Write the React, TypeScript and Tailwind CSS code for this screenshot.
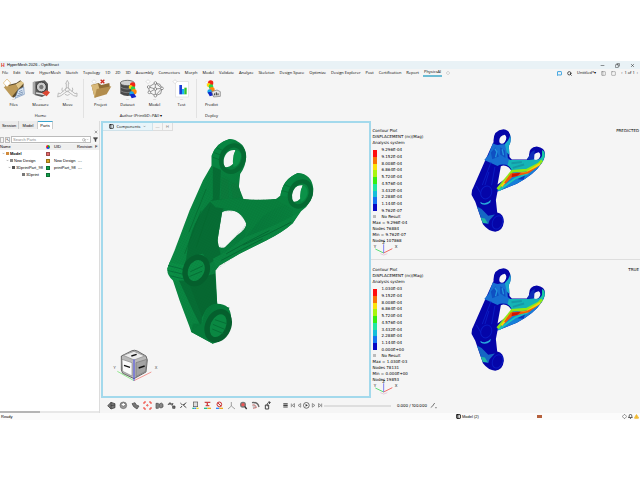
import type { ReactNode } from "react";
import {
  AlertTriangle,
  Bell,
  ChevronDown,
  Copy,
  Diamond,
  Filter,
  MessageSquare,
  Minus,
  PanelLeft,
  Search,
  Square,
  X,
} from "lucide-react";

const MENUS = [
  "File",
  "Edit",
  "View",
  "HyperMesh",
  "Sketch",
  "Topology",
  "1D",
  "2D",
  "3D",
  "Assembly",
  "Connectors",
  "Morph",
  "Model",
  "Validate",
  "Analyze",
  "Skeleton",
  "Design Space",
  "Optimize",
  "Design Explorer",
  "Post",
  "Certification",
  "Report",
];

const BANDS = [
  "bg-[#ff0d0d]",
  "bg-[#f97306]",
  "bg-[#fbe209]",
  "bg-[#a8f50c]",
  "bg-[#35ee12]",
  "bg-[#1fe6a4]",
  "bg-[#13bfd9]",
  "bg-[#1474f2]",
  "bg-[#0808c4]",
];

const SHARED_LEVELS = [
  "9.152E-04",
  "8.008E-04",
  "6.864E-04",
  "5.720E-04",
  "4.576E-04",
  "3.432E-04",
  "2.288E-04",
  "1.144E-04",
];

/* ---------- ribbon icons ---------- */

const BigIcon = ({ children }: { children: ReactNode }) => (
  <svg viewBox="0 0 66 60" className="h-5 w-[22px]" aria-hidden="true">
    {children}
  </svg>
);

const CornerDiamond = ({ fill = "#fff" }: { fill?: string }) => (
  <path d="M12 2 L18 8 L12 14 L6 8Z" fill={fill} stroke="#c2c2c2" strokeWidth="1.5" />
);

const FilesIcon = () => (
  <BigIcon>
    <path d="M6 20 L40 12 L52 4 L62 14 L60 40 L30 56Z" fill="#5b4a2c" />
    <path d="M2 24 L38 16 L46 30 L26 54Z" fill="#bd9a58" />
    <path d="M38 16 L54 6 L63 12 L46 30Z" fill="#e2c88c" />
    <path d="M46 32 L62 24 L64 46 L36 58Z" fill="#dce7f3" stroke="#6b8db8" strokeWidth="2" />
    <path d="M48 38 L58 34 M46 44 L60 39 M42 51 L60 44" stroke="#54749e" strokeWidth="2" />
    <path d="M12 0 L23 12 L12 24 L1 12Z" fill="#fff" stroke="#dcb36a" strokeWidth="2" />
  </BigIcon>
);

const MeasureIcon = () => (
  <BigIcon>
    <path d="M14 8 L44 4 L54 14 L54 44 L36 54 L14 48Z" fill="#5c5c5c" />
    <path d="M8 10 L16 6 L16 48 L8 44Z" fill="#a8a8a8" />
    <circle cx="34" cy="24" r="15" fill="#c9c9c9" stroke="#333" strokeWidth="3" />
    <circle cx="34" cy="24" r="8" fill="#777" stroke="#eee" strokeWidth="2" />
    <path d="M18 42 L44 46" stroke="#ddd" strokeWidth="5" />
    <path d="M36 42 L50 34 L60 40 L50 52Z" fill="#dc4632" />
  </BigIcon>
);

const MoveIcon = () => (
  <BigIcon>
    <g fill="none" stroke="#b1b1b1" strokeWidth="2.5">
      <path d="M31 4 L36 14 L34 14 L34 28 L54 44 L60 42 L60 52 L50 50 L31 36 L12 50 L2 54 L4 42 L10 44 L28 28 L28 14 L26 14Z" />
      <circle cx="31" cy="32" r="6" />
      <path d="M16 26 Q12 34 18 38 M46 26 Q50 34 44 38 M24 46 Q31 52 38 46" />
    </g>
  </BigIcon>
);

const ProjectIcon = () => (
  <BigIcon>
    <path d="M4 18 L26 12 L34 18 L58 12 L60 28 L14 56Z" fill="#8e6c34" />
    <path d="M4 18 L24 14 L30 36 L14 56Z" fill="#d8b878" />
    <path d="M20 30 L64 22 L50 46 L14 56Z" fill="#b28d4d" />
    <path d="M32 2 L43 13 M43 2 L32 13" stroke="#cf2a1d" strokeWidth="4" />
    <CornerDiamond />
  </BigIcon>
);

const DatasetIcon = () => (
  <BigIcon>
    <path d="M10 12 V44 Q32 58 52 44 V12Z" fill="#4a4a4a" />
    <ellipse cx="31" cy="12" rx="21" ry="8" fill="#cfcfcf" stroke="#444" strokeWidth="2" />
    <path d="M10 24 Q30 36 52 24 M10 35 Q30 47 52 35" fill="none" stroke="#999" strokeWidth="2" />
    <Contour />
  </BigIcon>
);

const Contour = () => (
  <g>
    <circle cx="47" cy="18" r="8" fill="#f12414" />
    <circle cx="41" cy="24" r="6" fill="#ffd60a" />
    <circle cx="48" cy="29" r="7" fill="#2fd44a" />
    <circle cx="51" cy="38" r="8" fill="#ff8a08" />
    <circle cx="44" cy="44" r="7" fill="#16a4e8" />
    <path d="M38 46 L52 44 L58 54 L44 58Z" fill="#1226c8" />
  </g>
);

const NetworkIcon = () => (
  <BigIcon>
    <g stroke="#666" strokeWidth="2">
      <path
        d="M14 24 L34 12 L54 28 L34 30Z M14 24 L16 40 L34 50 L54 28 M34 12 L34 50 M16 40 L34 30 M34 12 L48 16 L54 28 M34 50 L50 44 L54 28"
        fill="none"
      />
      <g fill="#fff">
        <circle cx="14" cy="24" r="4" />
        <circle cx="34" cy="12" r="4" />
        <circle cx="54" cy="28" r="4" />
        <circle cx="34" cy="30" r="4" />
        <circle cx="16" cy="40" r="4" />
        <circle cx="34" cy="50" r="4" />
      </g>
    </g>
    <CornerDiamond />
  </BigIcon>
);

const TestIcon = () => (
  <BigIcon>
    <rect x="14" y="8" width="38" height="46" fill="#fff" stroke="#dcdcdc" strokeWidth="2" />
    <rect x="25" y="18" width="8" height="28" fill="#1a3fd6" />
    <rect x="33" y="30" width="7" height="16" fill="#17b4ee" />
    <rect x="40" y="26" width="7" height="20" fill="#32c02c" />
    <CornerDiamond />
  </BigIcon>
);

const PredictIcon = () => (
  <BigIcon>
    <g transform="translate(-18 -6)">
      <Contour />
    </g>
    <path d="M32 38 L48 33 L58 38 L58 52 L38 54Z" fill="#e6e6e6" stroke="#777" strokeWidth="2" />
    <path d="M41 49 V43 M46 49 V40 M51 49 V43" stroke="#333" strokeWidth="3" />
    <path d="M16 6 L20 10 L16 14 L12 10Z" fill="#fff" stroke="#ccc" />
  </BigIcon>
);

const RibbonButton = ({ label, icon, menu = true }: { label: string; icon: ReactNode; menu?: boolean }) => (
  <button className="flex w-[27px] flex-col items-center">
    {icon}
    <span className="h-[3px] leading-[2px] text-[#777]">{menu ? "···" : ""}</span>
    <span className="leading-[6px]">{label}</span>
  </button>
);

const RibbonGroup = ({ title, children }: { title: string; children: ReactNode }) => (
  <section className="flex flex-col justify-between pb-[2px]">
    <div className="flex">{children}</div>
    <h2 className="text-center leading-[6px]">{title}</h2>
  </section>
);

/* ---------- model drawings ---------- */

const Bracket = () => (
  <svg viewBox="50 22 446 622" className="mr-[-10px] h-[207px] w-[149px] shrink-0" role="img" aria-label="Bracket mesh">
    <defs>
      <pattern id="mesh" width="7" height="7" patternUnits="userSpaceOnUse" patternTransform="rotate(28)">
        <path d="M0 0 H7 M0 0 V7" stroke="#04592a" strokeWidth="1.6" />
      </pattern>
      <linearGradient id="arm" x1="0" x2="1">
        <stop offset="0" stopColor="#0a8a43" />
        <stop offset="0.6" stopColor="#077a3b" />
        <stop offset="1" stopColor="#08843f" />
      </linearGradient>
    </defs>
    <path
      fillRule="evenodd"
      fill="url(#arm)"
      d="M186 105 L187 75 Q200 35 240 25 Q290 32 290 80 Q288 110 272 130 L268 170 L282 205 Q330 210 380 205 L393 195 Q400 145 445 127 Q488 130 492 175 Q492 215 455 242 L430 278 Q400 305 350 330 L270 370 L210 405 L198 420 L203 520 Q245 520 245 565 Q240 625 190 640 L125 605 L120 590 L90 510 L70 450 Q52 435 53 415 L60 395 L75 360 L120 240 L160 150Z
      M204 345 L205 320 L218 245 Q230 236 262 243 Q292 262 291 278 Q290 296 262 315 L226 350 Q212 356 204 345Z
      M224 110 Q217 85 232 67 Q242 56 258 58 Q250 76 252 98 Q240 112 224 110Z
      M428 212 Q421 190 434 174 Q444 163 460 164 Q452 180 454 203 Q442 217 428 212Z"
    />
    <path d="M190 108 L214 118 L210 205 Q240 205 245 212 L218 240 L204 330 L214 375 L180 400 L160 370 Q130 370 118 430 Q135 480 158 550 L155 590 L130 540 L88 450 L110 385 Q120 270 190 205Z" fill="#066d34" />
    <path d="M115 450 L196 430 L203 520 Q175 522 164 548 L158 560 Q135 500 115 450Z" fill="#066831" />
    <path d="M180 212 Q235 200 282 206 Q345 214 392 203 L425 222 Q360 232 330 270 L285 325 L290 280 Q275 240 235 236 L198 230Z" fill="#08803d" />
    <path d="M216 140 L236 148 L238 205 L214 205Z M244 160 L266 158 L276 200 L250 204Z" fill="#0b7b3c" />
    <path d="M286 320 Q370 290 450 245 L430 278 Q400 305 350 330 L270 370 L198 410 L190 385 L226 365Z" fill="#0a8641" />
    <path d="M280 344 Q360 310 425 275 M230 370 Q300 330 360 300 M215 390 Q280 355 340 325" fill="none" stroke="#056a33" strokeWidth="3" />
    <path d="M186 75 Q198 38 240 25 L262 29 Q215 38 210 115 L187 105Z M393 195 Q400 145 445 127 L465 131 Q424 145 416 200Z" fill="#078541" />
    <g fill="none" stroke="#05682f" strokeWidth="2">
      <path d="M190 80 L212 88 M194 66 L216 74 M202 52 L222 60 M398 180 L418 186 M404 162 L424 170" />
      <path d="M170 175 L118 305 M155 240 L105 370 M182 225 L140 350" />
    </g>
    <g fill="none" strokeWidth="13" stroke="#056a32">
      <ellipse cx="249" cy="84" rx="33" ry="41" transform="rotate(24 249 84)" />
      <ellipse cx="453" cy="190" rx="30" ry="39" transform="rotate(24 453 190)" />
    </g>
    <path d="M258 58 Q276 60 275 78 Q270 104 252 110 Q246 80 258 58Z M460 164 Q476 170 474 190 Q468 210 454 214 Q448 188 460 164Z" fill="#0b9248" />
    <path d="M53 415 L60 395 L110 405 L104 450 L72 450Z" fill="#0a8f45" />
    <path d="M56 405 L106 418 M54 420 L104 432 M62 436 L104 446" stroke="#05703a" strokeWidth="3" />
    <path d="M125 605 L130 580 L158 580 L165 545 Q176 522 203 520 L240 532 L190 640Z" fill="#067a3a" />
    <ellipse cx="140" cy="420" rx="32" ry="41" transform="rotate(24 140 420)" fill="#0b8d45" stroke="#055f2d" strokeWidth="16" />
    <ellipse cx="206" cy="586" rx="31" ry="44" transform="rotate(24 206 586)" fill="#0a8842" stroke="#055f2d" strokeWidth="16" />
    <path d="M122 424 L160 406 M120 438 L158 422 M190 582 L228 598 M188 596 L222 610 M196 568 L232 580" stroke="#056f35" strokeWidth="3" />
    <path
      fillRule="evenodd"
      fill="url(#mesh)"
      opacity="0.3"
      d="M190 108 L212 118 L268 170 L282 205 L380 205 L430 235 L430 278 L350 330 L270 370 L198 420 L200 520 L160 580 L125 600 L90 510 L70 450 L60 395 L120 240Z M204 345 L218 245 L262 243 L291 278 L226 350Z"
    />
  </svg>
);

const ContourBracket = () => (
  <svg viewBox="30 18 230 316" className="h-[105px] w-[77px] shrink-0" role="img" aria-label="Displacement contour">
    <path
      fillRule="evenodd"
      fill="#0505a8"
      d="M100 60 Q98 25 130 22 Q150 24 152 48 Q152 62 146 72 L148 105 L155 113 H200 L207 105 Q204 76 230 74 Q256 78 255 98 Q252 118 240 130 Q226 154 170 186 L112 209 L107 235 L111 272 Q131 276 131 300 Q128 328 105 330 Q85 330 68 308 L45 240 L34 220 Q33 205 40 195 L75 115Z
      M112 188 L122 133 Q133 128 146 137 Q158 148 150 160Z
      M118 62 Q114 42 134 38 Q143 46 134 60 Q126 70 118 62Z
      M220 112 Q216 94 236 91 Q245 98 237 110 Q228 118 220 112Z"
    />
    <path d="M84 100 L98 64 Q110 72 120 68 L140 66 L143 108 L155 118 L148 132 Q125 124 112 132 L72 114Z" fill="#176fd2" />
    <path d="M92 92 L106 76 L116 104 L96 112Z M120 76 L134 86 L136 108 L120 98Z" fill="#0f50c2" />
    <path d="M134 66 Q146 56 150 40 L152 50 Q152 62 146 72 L148 100 L140 92Z" fill="#18aacb" />
    <path d="M104 80 L110 90 L106 106 M126 82 L130 100" stroke="#2394dd" strokeWidth="4" fill="none" />
    <path d="M146 114 H202 L220 112 Q240 120 248 96 L254 102 Q250 120 240 130 L222 140 L190 150 L156 152 Q154 138 142 130Z" fill="#15b4b6" />
    <path d="M154 124 L185 120 M158 138 L192 128" stroke="#1599a6" strokeWidth="6" />
    <path d="M200 113 L214 90 L224 84 L222 112Z" fill="#0d2db8" />
    <path d="M246 84 Q256 90 254 102 L244 120 L232 130 L246 106Z" fill="#19cba0" />
    <path d="M150 160 L162 148 L205 150 L235 132 L240 130 Q226 154 170 186 L112 209 L112 200Z" fill="#157fd8" />
    <path d="M172 172 L196 158 L190 174Z" fill="#0c37bb" />
    <path d="M116 206 L148 182 L165 170 L205 154" stroke="#1cc7b4" strokeWidth="5" fill="none" />
    <path d="M112 202 L145 162 L156 148 L200 145 L236 126 L246 116" stroke="#8fe817" strokeWidth="8" fill="none" />
    <path d="M124 194 L152 160 L200 152 L240 126" stroke="#ffcf0a" strokeWidth="6" fill="none" />
    <path d="M132 182 L152 154 L198 151 L234 134 L206 154 L156 166 L136 186Z" fill="#ee5a0a" />
    <path d="M156 156 L182 153 L172 162 L154 166Z" fill="#cf1505" />
    <g fill="none" stroke="#0a1cc2" strokeWidth="3">
      <ellipse cx="78" cy="212" rx="16" ry="20" transform="rotate(24 78 212)" />
      <ellipse cx="112" cy="302" rx="15" ry="21" transform="rotate(24 112 302)" />
      <path d="M92 122 L66 190 M48 192 L62 215 M104 135 L94 190 M86 150 L74 190" />
    </g>
    <path d="M60 240 Q76 252 92 234 L90 242 Q76 254 62 246Z" fill="#28a8dc" />
    <path d="M50 254 L64 262 L84 282 L104 278 L88 296 L84 308 L68 304Z" fill="#1567c4" />
    <path d="M62 288 L74 290 L82 304 L68 304Z" fill="#21b6a5" />
  </svg>
);

const MiniTriad = () => (
  <svg viewBox="0 0 78 45" className="-mt-[3px] h-[15px] w-[26px]" aria-hidden="true">
    <path d="M32 36 L7 24" stroke="#3ed95c" strokeWidth="2.5" />
    <path d="M32 36 L58 23" stroke="#ef5148" strokeWidth="2.5" />
    <path d="M32 36 V10" stroke="#6868f0" strokeWidth="2.5" />
    <path d="M22 38 L32 42 L43 38" stroke="#c7a" fill="none" />
    <g fontSize="12" fill="#111">
      <text x="2" y="20">Y</text>
      <text x="28" y="9">Z</text>
      <text x="65" y="20">X</text>
    </g>
  </svg>
);

const ViewCube = () => (
  <svg viewBox="0 0 144 108" className="mb-3 ml-[7px] h-9 w-12" aria-hidden="true">
    <g stroke="#333" strokeWidth="2" strokeLinejoin="round">
      <path d="M34 24 L66 8 Q74 5 82 9 L108 24 L112 36 L108 72 L72 92 L38 76 L34 66Z" fill="#b9b9b9" />
      <path d="M40 22 L72 10 L104 24 L72 36Z" fill="#ededed" stroke="#888" />
      <path d="M36 34 L66 44 L66 84 L38 70Z" fill="#fafafa" stroke="#888" />
      <path d="M78 44 L110 34 L106 70 L78 86Z" fill="#a3a3a3" stroke="#777" />
    </g>
    <path d="M64 24 L80 19 M42 52 L60 58 M86 60 L104 54" stroke="#111" strokeWidth="4" />
    <path d="M72 98 L22 70" stroke="#62e25c" strokeWidth="2" />
    <path d="M72 98 L124 72" stroke="#f06a62" strokeWidth="2" />
    <path d="M72 98 V34" stroke="#4848ec" strokeWidth="3" />
    <g fontSize="12" fill="#444">
      <text x="10" y="64">Y</text>
      <text x="134" y="64">X</text>
    </g>
  </svg>
);

/* ---------- browser panel ---------- */

const Swatch = ({ color }: { color: string }) => (
  <span className={`mx-auto block h-1 w-1 border border-black/30 ${color}`} />
);

const ROWS = [
  { name: "Model", pad: "pl-[2px]", mark: "bg-[#d18a3c]", color: "bg-[#e46a6a]", uid: "", rev: "", bold: true, open: true },
  { name: "New Design", pad: "pl-[6px]", mark: "bg-[#888]", color: "bg-[#d8a520]", uid: "New Design", rev: "-.-", bold: false, open: true },
  { name: "3DprintPart_98", pad: "pl-[8px]", mark: "bg-[#555]", color: "bg-[#12a04a]", uid: "printPart_98", rev: "-.-", bold: false, open: true },
  { name: "3Dprint", pad: "pl-[22px]", mark: "bg-[#777]", color: "bg-[#12a04a]", uid: "", rev: "", bold: false, open: false },
];

const PartsPanel = () => (
  <aside className="flex w-[100px] shrink-0 flex-col border-r border-[#dcdcdc]">
    <div role="tablist" className="flex h-2 items-stretch bg-[#ececec] leading-[7px]">
      <button role="tab" className="w-[19px] border-r border-[#ccc]">Session</button>
      <button role="tab" className="w-[19px] border-r border-[#ccc]">Model</button>
      <button role="tab" aria-selected="true" className="w-[15px] border-t border-r border-t-[#3aa5cf] border-r-[#ccc] bg-white leading-[6px]">
        Parts
      </button>
      <span className="flex-1 bg-[#f5f5f5]" />
    </div>
    <div className="flex h-[6px] justify-end pr-[1px]">
      <button aria-label="Close panel">
        <X className="h-1 w-1" />
      </button>
    </div>
    <div className="flex h-[9px] items-center gap-[1px]">
      <button aria-label="Refresh" className="h-[6px] w-1 border border-[#bbb]" />
      <button aria-label="Select" className="h-[6px] w-[5px] border border-[#bbb] leading-[4px]">↖</button>
      <label className="flex h-[7px] flex-1 items-center border border-[#bbb] bg-white px-[1px]">
        <input aria-label="Search parts" placeholder="Search Parts" className="w-0 flex-1 leading-[5px] placeholder:text-[#888]" />
        <Search className="h-1 w-1 text-[#555]" />
        <ChevronDown className="h-[3px] w-[3px] text-[#555]" />
      </label>
      <button aria-label="Filter" className="px-[1px]">
        <Filter className="h-[5px] w-[5px]" fill="#555" />
      </button>
    </div>
    <div className="flex-1 bg-white">
      <table className="w-full table-fixed text-left whitespace-nowrap">
        <thead className="bg-[#efefef]">
          <tr className="h-[6px] leading-[6px]">
            <th className="w-[45px] font-normal">Name</th>
            <th className="w-[6px] font-normal">
              <span className="mx-auto block h-1 w-1 rounded-full bg-[conic-gradient(#2a2_0_33%,#24d_0_66%,#e22_0)]" />
            </th>
            <th className="w-[26px] pl-[3px] font-normal">UID</th>
            <th className="font-normal">Revision</th>
            <th className="w-1 font-normal">F</th>
          </tr>
        </thead>
        <tbody>
          {ROWS.map((row) => (
            <tr key={row.name} className="h-[7px] leading-[6px]">
              <td className={row.pad}>
                <span className="flex items-center gap-[1px]">
                  {row.open && <ChevronDown className="h-[3px] w-[3px] shrink-0" />}
                  <span className={`h-[3px] w-[3px] shrink-0 ${row.mark}`} />
                  <span className={row.bold ? "font-bold" : ""}>{row.name}</span>
                </span>
              </td>
              <td>
                <Swatch color={row.color} />
              </td>
              <td className="pl-[3px]">{row.uid}</td>
              <td className="pl-[1px]">{row.rev}</td>
              <td />
            </tr>
          ))}
        </tbody>
      </table>
    </div>
    <div className="h-[2px] bg-[#e8e8e8]">
      <div className="h-[2px] w-2/5 bg-[#b5b5b5]" />
    </div>
  </aside>
);

/* ---------- result views ---------- */

type ResultProps = {
  title: string;
  top: string;
  bottom: string;
  stats: string[];
};

const ResultView = ({ title, top, bottom, stats }: ResultProps) => (
  <section className="flex flex-1 pt-[7px] pl-[2px] font-['DejaVu_Sans',sans-serif] leading-[6px]">
    <div className="w-[97px] shrink-0">
      <p>Contour Plot</p>
      <p>DISPLACEMENT (m)(Mag)</p>
      <p>Analysis system</p>
      <div className="mt-[1px] flex gap-[5px]">
        <div className="my-[3px] flex w-1 flex-col">
          {BANDS.map((band) => (
            <span key={band} className={`flex-1 ${band}`} />
          ))}
        </div>
        <div className="flex h-[67px] flex-col justify-between">
          {[top, ...SHARED_LEVELS, bottom].map((level) => (
            <span key={level}>{level}</span>
          ))}
        </div>
      </div>
      <p className="mb-[1px] flex h-[5px] items-center gap-[6px]">
        <span className="h-[3px] w-[3px] bg-[#bbb]" />
        No Result
      </p>
      {stats.map((line) => (
        <p key={line}>{line}</p>
      ))}
      <MiniTriad />
    </div>
    <ContourBracket />
    <h3 className="ml-auto pr-[1px]">{title}</h3>
  </section>
);

/* ---------- bottom toolbar ---------- */

const VIEW_TOOLS: { name: string; art: ReactNode }[] = [
  { name: "Shaded", art: <path d="M2 14 L12 4 L24 8 L24 20 L12 24Z M12 4 V24 M12 14 L24 12" fill="#777" stroke="#333" strokeWidth="2" /> },
  { name: "Sphere", art: <g stroke="#666" strokeWidth="2"><circle cx="13" cy="13" r="10" fill="#999" /><path d="M5 11 L13 5 L21 11 L13 16Z" fill="#fff" /></g> },
  { name: "Rotate", art: <path d="M3 8 L12 5 L16 12 L24 15 L18 24 L8 17Z" fill="#777" stroke="#444" strokeWidth="2" /> },
  { name: "Fit", art: <g stroke="#f03a30" strokeWidth="3" fill="none"><path d="M3 9 V3 H9 M18 3 H24 V9 M24 18 V24 H18 M9 24 H3 V18" /><circle cx="13" cy="13" r="2" /></g> },
  { name: "Section", art: <path d="M3 7 H10 V22 H3Z M13 9 L19 6 L24 10 V18 L18 21 L13 19Z" fill="#888" stroke="#444" strokeWidth="2" /> },
  { name: "Previous view", art: <path d="M3 12 Q8 0 15 10 M10 10 L16 13 L18 6 M17 15 H24 V22 H17Z" fill="#777" stroke="#333" strokeWidth="2" /> },
  { name: "Reverse", art: <path d="M4 6 L9 11 M22 5 L14 11 M4 21 L9 15 M13 13 L22 20 M10 11 H18" fill="none" stroke="#555" strokeWidth="3" /> },
  { name: "Mask", art: <g><rect x="7" y="3" width="13" height="14" fill="#ddd" stroke="#555" strokeWidth="2" /><path d="M4 22 H10" stroke="#2b8" strokeWidth="4" /><path d="M10 22 H16" stroke="#38f" strokeWidth="4" /><path d="M16 22 H23" stroke="#ed2" strokeWidth="4" /></g> },
  { name: "Isolate", art: <g><path d="M5 4 H22 M13 4 V16 M8 14 H19" stroke="#c44" strokeWidth="4" /><path d="M3 22 H13" stroke="#2b8" strokeWidth="4" /><path d="M13 22 H24" stroke="#ea2" strokeWidth="4" /></g> },
  { name: "Unmask", art: <g><circle cx="13" cy="10" r="7" fill="#eee" stroke="#c33" strokeWidth="3" /><path d="M8 5 L19 16" stroke="#c33" strokeWidth="3" /><path d="M3 22 H13" stroke="#38f" strokeWidth="4" /><path d="M13 22 H24" stroke="#ea2" strokeWidth="4" /></g> },
  { name: "Axes", art: <path d="M13 3 V15 L3 24 M13 15 L24 24" fill="none" stroke="#777" strokeWidth="2" /> },
  { name: "Find", art: <g><circle cx="12" cy="11" r="7" fill="#e55" stroke="#777" strokeWidth="4" /><path d="M17 16 L23 24" stroke="#333" strokeWidth="4" /></g> },
  { name: "Spherical clip", art: <g><path d="M3 5 Q20 2 24 18" fill="none" stroke="#666" strokeWidth="4" /><path d="M4 12 Q14 9 16 20 L6 22" fill="#ccc" stroke="#b44" strokeWidth="2" /></g> },
  { name: "Export", art: <path d="M7 12 H17 V24 H7Z M13 16 Q10 4 21 4 M17 2 L22 4 L18 9" fill="none" stroke="#444" strokeWidth="3" /> },
];

const Tool = ({ name, children, small = false }: { name: string; children: ReactNode; small?: boolean }) => (
  <button aria-label={name}>
    <svg viewBox="0 0 27 27" className={small ? "h-[7px] w-[7px]" : "h-[9px] w-[9px]"}>
      {children}
    </svg>
  </button>
);

const ViewToolbar = () => (
  <div className="flex h-[15px] shrink-0 items-center pl-[6px]">
    <div className="flex gap-[3px]">
      {VIEW_TOOLS.map((tool) => (
        <Tool key={tool.name} name={tool.name}>
          {tool.art}
        </Tool>
      ))}
    </div>
    <div className="ml-[10px] flex items-center">
      <Tool small name="Animation list">
        <path d="M5 7 H22 M5 13 H22 M5 19 H22" stroke="#444" strokeWidth="4" />
      </Tool>
      <Tool small name="First frame">
        <path d="M9 6 V20 M21 6 L12 13 L21 20Z" fill="none" stroke="#777" strokeWidth="3" />
      </Tool>
      <Tool small name="Previous frame">
        <path d="M18 6 L8 13 L18 20Z" fill="none" stroke="#777" strokeWidth="3" />
      </Tool>
      <Tool small name="Play">
        <circle cx="13" cy="13" r="11" fill="#fff" stroke="#444" strokeWidth="3" />
        <path d="M10 8 L19 13 L10 18Z" fill="#333" />
      </Tool>
      <Tool small name="Next frame">
        <path d="M9 6 L19 13 L9 20Z" fill="none" stroke="#777" strokeWidth="3" />
      </Tool>
      <Tool small name="Last frame">
        <path d="M18 6 V20 M6 6 L15 13 L6 20Z" fill="none" stroke="#777" strokeWidth="3" />
      </Tool>
    </div>
    <input
      type="range"
      aria-label="Animation time"
      defaultValue={0}
      className="h-[2px] w-[67px] appearance-none bg-[#dedede] [&::-webkit-slider-thumb]:h-[2px] [&::-webkit-slider-thumb]:w-[1px] [&::-webkit-slider-thumb]:appearance-none"
    />
    <span className="ml-[6px] w-[33px] font-[Inter,sans-serif]">0.000 / 100.000</span>
    <Tool small name="Animation settings">
      <path d="M3 21 L10 16 L16 6 L19 6 M20 22 H26" fill="none" stroke="#555" strokeWidth="3" />
    </Tool>
  </div>
);

const App = () => {
  return (
    <div className="flex h-screen flex-col bg-white pt-[61px] pb-[60px] font-['Liberation_Sans',Arial,sans-serif] text-[4px] leading-[6px] text-black">
      <div className="flex flex-1 flex-col overflow-hidden bg-[#f5f5f5]">
        {/* Title bar */}
        <header className="flex h-2 shrink-0 items-center bg-[#e9f2f6] pr-[5px]">
          <span className="w-[7px] pl-[1px] text-[5px] font-bold text-[#e0362c]">H</span>
          <h1>HyperMesh 2026 - OptiStruct</h1>
          <div className="ml-auto flex gap-[10px]">
            <button aria-label="Minimize"><Minus className="h-[5px] w-[5px]" /></button>
            <button aria-label="Restore"><Copy className="h-[5px] w-[5px] -scale-x-100" /></button>
            <button aria-label="Close"><X className="h-[5px] w-[5px]" /></button>
          </div>
        </header>

        {/* Menu bar */}
        <nav className="flex h-2 shrink-0 items-center gap-[5px] pr-[2px] pl-[2px] font-['Open_Sans',sans-serif] whitespace-nowrap">
          {MENUS.map((menu) => (
            <button key={menu}>{menu}</button>
          ))}
          <button className="-mx-[1px] h-2 border-b-2 border-[#6cbcd4] px-[1px]">PhysicsAI</button>
          <Diamond className="h-1 w-1 text-[#888]" />
          <div className="ml-auto flex items-center gap-[5px]">
            <button aria-label="Feedback"><MessageSquare className="h-[5px] w-[5px] text-[#1591dc]" strokeWidth={4} /></button>
            <button aria-label="Search"><Search className="h-[5px] w-[5px]" strokeWidth={3} /></button>
            <button>Untitled*▾</button>
            <button aria-label="Layout"><PanelLeft className="h-[5px] w-[5px] text-[#666]" /></button>
            <button aria-label="New page"><Square className="h-[5px] w-[5px] text-[#666]" /></button>
            <span className="flex gap-[2px]">
              <button aria-label="Previous page">‹</button>
              1 of 1
              <button aria-label="Next page">›</button>
            </span>
          </div>
        </nav>

        {/* Ribbon */}
        <div className="flex h-11 shrink-0 pt-[2px] font-['Open_Sans',sans-serif]">
          <RibbonGroup title="Home">
            <RibbonButton label="Files" icon={<FilesIcon />} />
            <RibbonButton label="Measure" icon={<MeasureIcon />} />
            <RibbonButton label="Move" icon={<MoveIcon />} />
          </RibbonGroup>
          <span className="mr-[3px] mb-[3px] ml-[2px] border-l border-[#e2e2e2]" />
          <RibbonGroup title="Author (PrintGD+PAI)  ▾">
            <RibbonButton label="Project" icon={<ProjectIcon />} />
            <RibbonButton label="Dataset" icon={<DatasetIcon />} />
            <RibbonButton label="Model" icon={<NetworkIcon />} />
            <RibbonButton label="Test" icon={<TestIcon />} />
          </RibbonGroup>
          <span className="mr-[1px] mb-[3px] ml-[1px] border-l border-[#e2e2e2]" />
          <RibbonGroup title="Deploy">
            <RibbonButton label="Predict" icon={<PredictIcon />} menu={false} />
          </RibbonGroup>
        </div>

        <div className="flex flex-1">
          <PartsPanel />
          <main className="flex flex-1 flex-col pl-[1px]">
            <div className="flex flex-1">
              <section className="flex w-1/2 flex-col border-2 border-[#a3d9ec]">
                <div className="flex h-2 shrink-0">
                  <button className="flex w-[50px] items-center justify-center gap-[3px] border-r border-b border-[#cfe2ea] bg-[#e8f5fa] font-['Open_Sans',sans-serif]">
                    <PanelLeft className="h-[5px] w-[5px]" strokeWidth={3} />
                    Components
                    <ChevronDown className="h-[3px] w-[3px]" />
                  </button>
                  <button className="w-[10px] border-r border-b border-[#ddd] text-[#888]">—</button>
                  <button className="w-[10px] border-r border-b border-[#ddd] text-[#888]">H</button>
                </div>
                <div className="flex flex-1 flex-col justify-between pt-[7px]">
                  <div className="flex justify-center">
                    <Bracket />
                  </div>
                  <ViewCube />
                </div>
              </section>
              <div className="flex w-1/2 flex-col divide-y divide-[#dedede]">
                <ResultView
                  title="PREDICTED"
                  top="9.296E-04"
                  bottom="9.762E-07"
                  stats={["Max = 9.296E-04", "Nodes 76884", "Min = 9.762E-07", "Nodes 107868"]}
                />
                <ResultView
                  title="TRUE"
                  top="1.030E-03"
                  bottom="0.000E+00"
                  stats={["Max = 1.030E-03", "Nodes 78131", "Min = 0.000E+00", "Nodes 19853"]}
                />
              </div>
            </div>
            <ViewToolbar />
          </main>
        </div>

        {/* Status bar */}
        <footer className="flex h-[7px] shrink-0 items-center bg-[#fbfbfb] px-[1px]">
          <span className="flex-1">Ready</span>
          <span className="flex w-[81px] items-center gap-[1px]">
            <PanelLeft className="h-[5px] w-[5px]" strokeWidth={4} />
            Model (2)
          </span>
          <span className="h-[3px] w-[5px] bg-[#b5603c]" />
          <span className="ml-20 flex items-center gap-[1px]">
            <Diamond className="h-[5px] w-[5px]" />
            <Bell className="h-[5px] w-[5px]" strokeWidth={3} />
            <AlertTriangle className="h-[5px] w-[5px] text-[#e8a40c]" fill="#f6c544" />
          </span>
        </footer>
      </div>
    </div>
  );
};

export default App;
